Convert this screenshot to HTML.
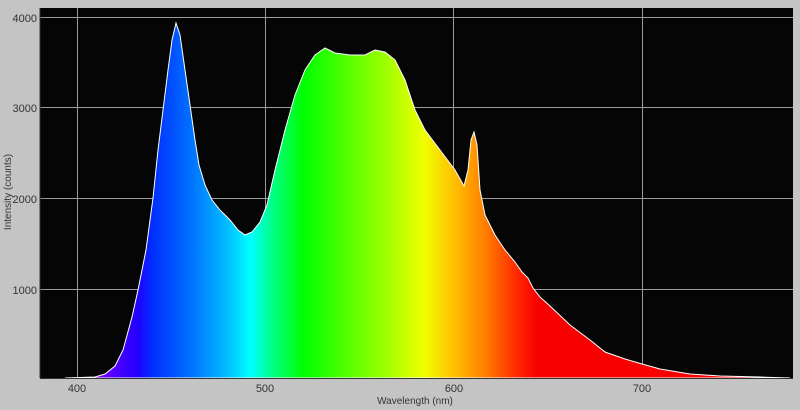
<!DOCTYPE html>
<html><head><style>
body{margin:0;width:800px;height:410px;background:#c4c4c4;overflow:hidden;font-family:"Liberation Sans",sans-serif;}
</style></head><body>
<svg width="800" height="410" xmlns="http://www.w3.org/2000/svg" style="position:absolute;left:0;top:0">
<defs>
<linearGradient id="sp" gradientUnits="userSpaceOnUse" x1="40" y1="0" x2="793" y2="0">
<stop offset="0" stop-color="#8000ff"/>
<stop offset="0.08" stop-color="#7000ff"/>
<stop offset="0.13" stop-color="#2000ff"/>
<stop offset="0.15" stop-color="#0030ff"/>
<stop offset="0.2" stop-color="#0070ff"/>
<stop offset="0.25" stop-color="#00c0ff"/>
<stop offset="0.28" stop-color="#00ffff"/>
<stop offset="0.31" stop-color="#00ff80"/>
<stop offset="0.35" stop-color="#00ff00"/>
<stop offset="0.45" stop-color="#90ff00"/>
<stop offset="0.51" stop-color="#f0ff00"/>
<stop offset="0.55" stop-color="#ffc000"/>
<stop offset="0.59" stop-color="#ff8000"/>
<stop offset="0.63" stop-color="#ff3000"/>
<stop offset="0.66" stop-color="#f80000"/>
<stop offset="1" stop-color="#f80000"/>
</linearGradient>
</defs>
<rect x="40" y="8" width="753" height="370" fill="#050505"/>
<g stroke="#9a9a9a" stroke-width="1">
<line x1="77.5" y1="8" x2="77.5" y2="378"/>
<line x1="265.5" y1="8" x2="265.5" y2="378"/>
<line x1="453.5" y1="8" x2="453.5" y2="378"/>
<line x1="642.5" y1="8" x2="642.5" y2="378"/>
<line x1="40" y1="17.5" x2="793" y2="17.5"/>
<line x1="40" y1="107.5" x2="793" y2="107.5"/>
<line x1="40" y1="198.5" x2="793" y2="198.5"/>
<line x1="40" y1="289.5" x2="793" y2="289.5"/>
</g>
<path fill="url(#sp)" stroke="#ffffff" stroke-width="1" d="M65,378 L95,377 L105,374 L115,366 L123,350 L132,317 L138,290 L146,250 L153,198 L158,150 L163,110 L168,70 L172,40 L176,23 L180,35 L185,70 L190,105 L195,140 L199,165 L205,185 L212,200 L220,210 L230,220 L238,230 L245,235 L252,232 L260,222 L267,205 L275,170 L285,130 L295,95 L305,70 L315,55 L325,48 L335,53 L350,55 L365,55 L375,50 L385,52 L395,60 L405,80 L415,110 L425,130 L440,150 L455,170 L464,186 L468,170 L471,140 L474,132 L477,145 L480,190 L485,215 L495,235 L505,250 L515,262 L522,272 L528,278 L533,288 L540,297 L550,306 L570,325 L590,340 L605,352 L625,359 L642,364 L660,369 L690,374 L720,376 L760,377 L790,378 Z"/>
<line x1="40" y1="378.5" x2="793" y2="378.5" stroke="#333"/>
<line x1="40" y1="8" x2="40" y2="378" stroke="#333"/>
<g font-size="11" fill="#333" text-anchor="end">
<text x="37" y="22">4000</text>
<text x="37" y="112">3000</text>
<text x="37" y="203">2000</text>
<text x="37" y="294">1000</text>
</g>
<g font-size="11" fill="#333" text-anchor="middle">
<text x="77" y="392">400</text>
<text x="265" y="392">500</text>
<text x="454" y="392">600</text>
<text x="642" y="392">700</text>
<text x="415" y="404" font-size="10">Wavelength (nm)</text>
<text transform="translate(11,192) rotate(-90)" font-size="10">Intensity (counts)</text>
</g>
</svg>
</body></html>
